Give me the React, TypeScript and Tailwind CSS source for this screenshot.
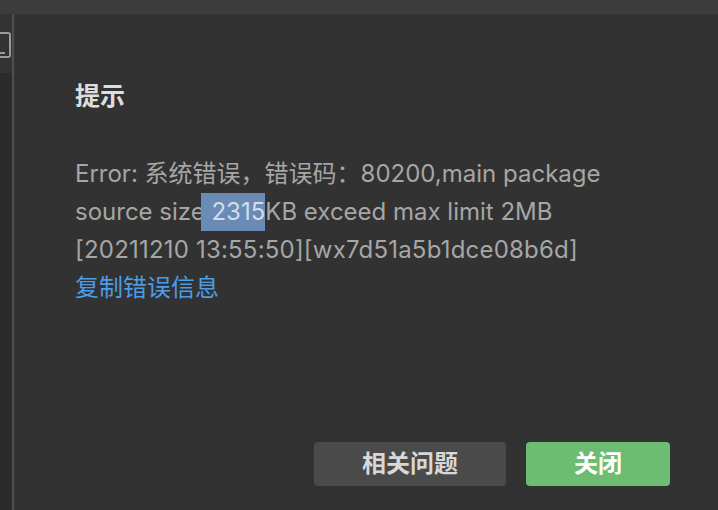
const font = {
  fontFamily: '"Inter", "Noto Sans CJK SC", sans-serif',
};

const SideBar = () => (
  <div className="flex w-[12px] flex-col">
    <div className="h-[59px] bg-[#333333] pt-[18px]">
      <div className="relative h-[26px] w-[11px] rounded-r-[3px] border-2 border-l-0 border-[#9a9a9a]">
        <div className="absolute bottom-[2px] left-0 h-[2px] w-[5px] bg-[#9a9a9a]" />
      </div>
    </div>
    <div className="flex-1 bg-[#2b2b2b]" />
  </div>
);

export default function App() {
  return (
    <div
      className="flex h-[510px] w-[718px] flex-col overflow-hidden bg-[#323232]"
      style={font}
    >
      <div className="h-[14px] bg-[#3c3c3c]" />
      <div className="flex flex-1">
        <SideBar />
        <div className="w-[2px] bg-[#4f4f4f]" />
        <div className="flex flex-1 flex-col pl-[61px] pr-[48px] pb-[24px]">
          <h2 className="mt-[66px] text-[25px] font-bold leading-[32px] text-[#dedede]">
            提示
          </h2>
          <div className="mt-[43px] whitespace-nowrap text-[24px] leading-[38px] text-[#a6a6a6]">
            <div>Error: 系统错误，错误码：80200,main package</div>
            <div>
              source size
              <span className="-ml-[4px] inline-block bg-[#6a8bb5] pl-[4px] text-[#d4dcea]">
                &nbsp;2315
              </span>
              KB exceed max limit 2MB
            </div>
            <div className="tracking-[0.2px]">[20211210 13:55:50][wx7d51a5b1dce08b6d]</div>
            <a href="#" className="text-[#4a9de6]">
              复制错误信息
            </a>
          </div>
          <div className="mt-auto flex justify-end gap-[20px]">
            <button className="h-[44px] w-[192px] rounded-[4px] bg-[#4a4a4a] text-[24px] font-semibold text-[#d8d8d8]">
              相关问题
            </button>
            <button className="h-[44px] w-[144px] rounded-[4px] bg-[#6cbd72] text-[24px] font-semibold text-white">
              关闭
            </button>
          </div>
        </div>
      </div>
    </div>
  );
}
